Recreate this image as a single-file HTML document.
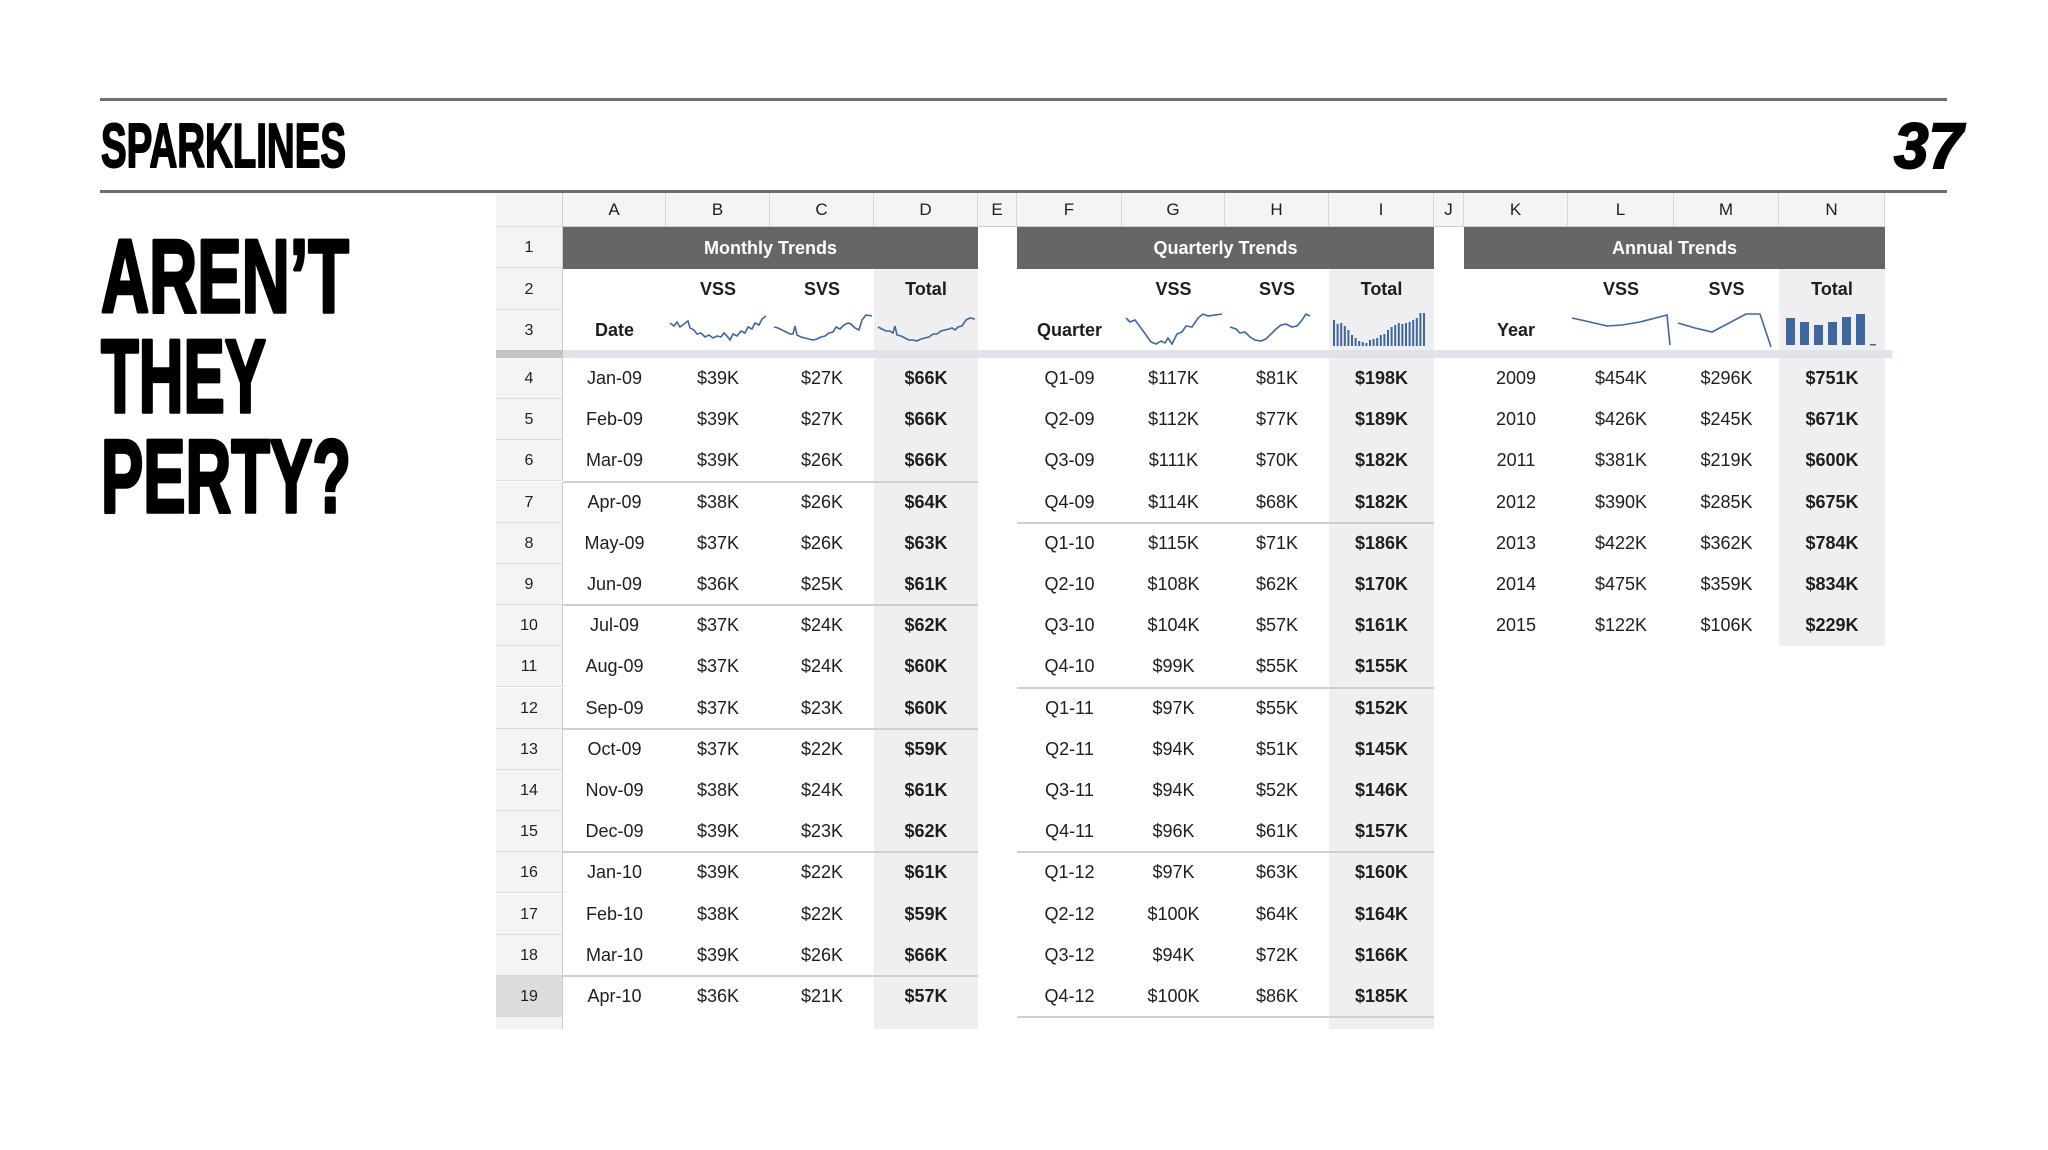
<!DOCTYPE html>
<html><head><meta charset="utf-8"><style>
*{margin:0;padding:0;box-sizing:border-box}
body{width:2048px;height:1150px;background:#fff;position:relative;overflow:hidden;font-family:"Liberation Sans",Arial,sans-serif;color:#1e1e1e}
.a{position:absolute}
.r{position:absolute;left:496px;height:41px;display:flex;font-size:18px;line-height:41px;text-align:center}
.r span{display:block;flex:none}
.r span:nth-child(1){width:67px;background:#f4f4f4;border-bottom:1px solid #dcdcdc;border-right:1px solid #ccc;font-size:16px}
.r span:nth-child(2){width:103px}.r span:nth-child(3){width:104px}.r span:nth-child(4){width:104px}.r span:nth-child(5){width:104px;font-weight:bold}
.r span:nth-child(6){width:39px}.r span:nth-child(7){width:105px}.r span:nth-child(8){width:103px}.r span:nth-child(9){width:104px}.r span:nth-child(10){width:105px;font-weight:bold}
.r span:nth-child(11){width:30px}.r span:nth-child(12){width:104px}.r span:nth-child(13){width:106px}.r span:nth-child(14){width:105px}.r span:nth-child(15){width:106px;font-weight:bold}
.h{top:193px;height:34px;line-height:33px;font-size:17px;background:#f4f4f4}
.h span{border-right:1px solid #d6d6d6;border-bottom:1px solid #ccc;font-weight:normal!important}
.b span{font-weight:bold}
.t{background:#666;color:#fff;font-weight:bold;font-size:18px;height:42px;line-height:42px;text-align:center;top:227px}
.sh{background:#efeff1}
.hl{height:2px;background:#cfcfcf}
</style></head><body>
<div class="a" style="left:100px;top:98px;width:1847px;height:3px;background:#6e6e6e"></div>
<div class="a" style="left:100px;top:190px;width:1847px;height:3px;background:#6e6e6e"></div>
<svg class="a" style="left:0;top:0" width="2048" height="560">
<g font-family="Liberation Sans Narrow, Liberation Sans, sans-serif" font-weight="bold" fill="#000" stroke="#000" stroke-linejoin="round">
<text x="101" y="167" font-size="62" stroke-width="2" textLength="245" lengthAdjust="spacingAndGlyphs">SPARKLINES</text>
<text x="101" y="312" font-size="104" stroke-width="3.5" textLength="248" lengthAdjust="spacingAndGlyphs">AREN’T</text>
<text x="101" y="412" font-size="104" stroke-width="3.5" textLength="165" lengthAdjust="spacingAndGlyphs">THEY</text>
<text x="101" y="512" font-size="104" stroke-width="3.5" textLength="250" lengthAdjust="spacingAndGlyphs">PERTY?</text>
</g>
<text x="1894" y="168" font-family="Liberation Sans, sans-serif" font-weight="bold" font-style="italic" font-size="64" stroke="#000" stroke-width="2" textLength="69" lengthAdjust="spacingAndGlyphs">37</text>
</svg>

<div class="a sh" style="left:874px;top:269px;width:104px;height:760px"></div>
<div class="a sh" style="left:1329px;top:269px;width:105px;height:760px"></div>
<div class="a sh" style="left:1779px;top:269px;width:106px;height:377px"></div>
<div class="a" style="left:496px;top:350px;width:1396px;height:8px;background:#dfe4ea"></div>
<div class="a" style="left:496px;top:350px;width:67px;height:8px;background:#c4c4c4"></div>
<div class="a" style="left:496px;top:227px;width:67px;height:123px;background:#f4f4f4;border-right:1px solid #ccc"></div>
<div class="a" style="left:496px;top:1017px;width:67px;height:12px;background:#f4f4f4;border-right:1px solid #ccc"></div>
<div class="a" style="left:559px;top:193px;width:5px;height:34px;background:#bdbdbd"></div>
<div class="a hl" style="left:563px;top:481px;width:415px"></div>
<div class="a hl" style="left:563px;top:604px;width:415px"></div>
<div class="a hl" style="left:563px;top:728px;width:415px"></div>
<div class="a hl" style="left:563px;top:851px;width:415px"></div>
<div class="a hl" style="left:563px;top:975px;width:415px"></div>
<div class="a hl" style="left:1017px;top:522px;width:417px"></div>
<div class="a hl" style="left:1017px;top:687px;width:417px"></div>
<div class="a hl" style="left:1017px;top:851px;width:417px"></div>
<div class="a hl" style="left:1017px;top:1016px;width:417px"></div>

<div class="r h"><span></span><span>A</span><span>B</span><span>C</span><span>D</span><span>E</span><span>F</span><span>G</span><span>H</span><span>I</span><span>J</span><span>K</span><span>L</span><span>M</span><span>N</span></div>
<div class="a t" style="left:563px;width:415px">Monthly Trends</div>
<div class="a t" style="left:1017px;width:417px">Quarterly Trends</div>
<div class="a t" style="left:1464px;width:421px">Annual Trends</div>
<div class="r" style="top:227px"><span>1</span></div>
<div class="r b" style="top:269px"><span style="font-weight:normal">2</span><span></span><span>VSS</span><span>SVS</span><span>Total</span><span></span><span></span><span>VSS</span><span>SVS</span><span>Total</span><span></span><span></span><span>VSS</span><span>SVS</span><span>Total</span></div>
<div class="r b" style="top:310px;height:40px"><span style="font-weight:normal;border-bottom:none">3</span><span>Date</span><span></span><span></span><span></span><span></span><span>Quarter</span><span></span><span></span><span></span><span></span><span>Year</span></div>

<svg class="a" style="left:0;top:300px" width="2048" height="60" fill="none" stroke="#3e67a0" stroke-width="1.6">
<polyline points="670,23 674,26 677,22 680,27 684,24 688,21 690,28 694,30 697,34 701,33 705,37 709,35 713,38 717,36 721,37 724,33 727,36 730,40 733,34 737,36 741,31 745,33 748,27 752,29 755,23 759,25 762,19 766,16"/>
<polyline points="774,27 778,28 782,30 786,32 790,34 793,34 795,26 797,35 801,37 805,38 809,39 813,40 817,39 821,37 825,36 829,33 833,32 836,27 840,29 844,25 848,23 851,24 855,28 859,30 862,20 866,15 872,16"/>
<polyline points="878,27 882,29 886,31 890,31 893,33 895,26 897,35 901,36 905,38 909,40 913,40 917,41 921,39 925,38 929,37 933,34 937,34 941,31 945,30 949,29 952,28 955,30 958,27 962,26 966,20 970,18 975,19"/>
<polyline points="1126,18 1130,22 1135,20 1141,28 1146,35 1151,42 1156,44 1161,41 1165,43 1168,38 1172,44 1177,34 1182,32 1186,26 1192,27 1198,18 1203,14 1208,16 1222,14"/>
<polyline points="1230,27 1236,29 1240,33 1245,32 1250,37 1255,40 1261,41 1266,39 1271,34 1276,29 1281,25 1286,24 1292,27 1297,26 1302,20 1306,14 1310,16"/>
<polyline points="1572,18 1590,22 1607,26 1622,25 1640,22 1667,15 1670,45"/>
<polyline points="1678,23 1695,28 1712,32 1746,14 1760,14 1771,47"/>
</svg>
<svg class="a" style="left:1333px;top:310px" width="100" height="40" fill="#3e67a0">
<rect x="0" y="10" width="2" height="26"/><rect x="3.6" y="14" width="2" height="22"/><rect x="7.2" y="13" width="2" height="23"/><rect x="10.8" y="16" width="2" height="20"/><rect x="14.4" y="20" width="2" height="16"/><rect x="18" y="25" width="2" height="11"/><rect x="21.6" y="28" width="2" height="8"/><rect x="25.2" y="31" width="2" height="5"/><rect x="28.8" y="32" width="2" height="4"/><rect x="32.4" y="33" width="2" height="3"/><rect x="36" y="30" width="2" height="6"/><rect x="39.6" y="29" width="2" height="7"/><rect x="43.2" y="28" width="2" height="8"/><rect x="46.8" y="25" width="2" height="11"/><rect x="50.4" y="24" width="2" height="12"/><rect x="54" y="20" width="2" height="16"/><rect x="57.6" y="17" width="2" height="19"/><rect x="61.2" y="15" width="2" height="21"/><rect x="64.8" y="13" width="2" height="23"/><rect x="68.4" y="14" width="2" height="22"/><rect x="72" y="13" width="2" height="23"/><rect x="75.6" y="12" width="2" height="24"/><rect x="79.2" y="10" width="2" height="26"/><rect x="82.8" y="8" width="2" height="28"/><rect x="86.4" y="3" width="2" height="33"/><rect x="90" y="3" width="2" height="33"/>
</svg>
<svg class="a" style="left:1786px;top:310px" width="100" height="40" fill="#3e67a0">
<rect x="0" y="8" width="9" height="27"/><rect x="14" y="12" width="9" height="23"/><rect x="28" y="15" width="9" height="20"/><rect x="42" y="12" width="9" height="23"/><rect x="56" y="7" width="9" height="28"/><rect x="70" y="4" width="9" height="31"/><rect x="84" y="34" width="6" height="1.5"/>
</svg>

<div class="r" style="top:358px"><span>4</span><span>Jan-09</span><span>$39K</span><span>$27K</span><span>$66K</span><span></span><span>Q1-09</span><span>$117K</span><span>$81K</span><span>$198K</span><span></span><span>2009</span><span>$454K</span><span>$296K</span><span>$751K</span></div>
<div class="r" style="top:399px"><span>5</span><span>Feb-09</span><span>$39K</span><span>$27K</span><span>$66K</span><span></span><span>Q2-09</span><span>$112K</span><span>$77K</span><span>$189K</span><span></span><span>2010</span><span>$426K</span><span>$245K</span><span>$671K</span></div>
<div class="r" style="top:440px"><span>6</span><span>Mar-09</span><span>$39K</span><span>$26K</span><span>$66K</span><span></span><span>Q3-09</span><span>$111K</span><span>$70K</span><span>$182K</span><span></span><span>2011</span><span>$381K</span><span>$219K</span><span>$600K</span></div>
<div class="r" style="top:482px"><span>7</span><span>Apr-09</span><span>$38K</span><span>$26K</span><span>$64K</span><span></span><span>Q4-09</span><span>$114K</span><span>$68K</span><span>$182K</span><span></span><span>2012</span><span>$390K</span><span>$285K</span><span>$675K</span></div>
<div class="r" style="top:523px"><span>8</span><span>May-09</span><span>$37K</span><span>$26K</span><span>$63K</span><span></span><span>Q1-10</span><span>$115K</span><span>$71K</span><span>$186K</span><span></span><span>2013</span><span>$422K</span><span>$362K</span><span>$784K</span></div>
<div class="r" style="top:564px"><span>9</span><span>Jun-09</span><span>$36K</span><span>$25K</span><span>$61K</span><span></span><span>Q2-10</span><span>$108K</span><span>$62K</span><span>$170K</span><span></span><span>2014</span><span>$475K</span><span>$359K</span><span>$834K</span></div>
<div class="r" style="top:605px"><span>10</span><span>Jul-09</span><span>$37K</span><span>$24K</span><span>$62K</span><span></span><span>Q3-10</span><span>$104K</span><span>$57K</span><span>$161K</span><span></span><span>2015</span><span>$122K</span><span>$106K</span><span>$229K</span></div>
<div class="r" style="top:646px"><span>11</span><span>Aug-09</span><span>$37K</span><span>$24K</span><span>$60K</span><span></span><span>Q4-10</span><span>$99K</span><span>$55K</span><span>$155K</span></div>
<div class="r" style="top:688px"><span>12</span><span>Sep-09</span><span>$37K</span><span>$23K</span><span>$60K</span><span></span><span>Q1-11</span><span>$97K</span><span>$55K</span><span>$152K</span></div>
<div class="r" style="top:729px"><span>13</span><span>Oct-09</span><span>$37K</span><span>$22K</span><span>$59K</span><span></span><span>Q2-11</span><span>$94K</span><span>$51K</span><span>$145K</span></div>
<div class="r" style="top:770px"><span>14</span><span>Nov-09</span><span>$38K</span><span>$24K</span><span>$61K</span><span></span><span>Q3-11</span><span>$94K</span><span>$52K</span><span>$146K</span></div>
<div class="r" style="top:811px"><span>15</span><span>Dec-09</span><span>$39K</span><span>$23K</span><span>$62K</span><span></span><span>Q4-11</span><span>$96K</span><span>$61K</span><span>$157K</span></div>
<div class="r" style="top:852px"><span>16</span><span>Jan-10</span><span>$39K</span><span>$22K</span><span>$61K</span><span></span><span>Q1-12</span><span>$97K</span><span>$63K</span><span>$160K</span></div>
<div class="r" style="top:894px"><span>17</span><span>Feb-10</span><span>$38K</span><span>$22K</span><span>$59K</span><span></span><span>Q2-12</span><span>$100K</span><span>$64K</span><span>$164K</span></div>
<div class="r" style="top:935px"><span>18</span><span>Mar-10</span><span>$39K</span><span>$26K</span><span>$66K</span><span></span><span>Q3-12</span><span>$94K</span><span>$72K</span><span>$166K</span></div>
<div class="r" style="top:976px"><span style="background:#dcdcdc">19</span><span>Apr-10</span><span>$36K</span><span>$21K</span><span>$57K</span><span></span><span>Q4-12</span><span>$100K</span><span>$86K</span><span>$185K</span></div>
</body></html>
